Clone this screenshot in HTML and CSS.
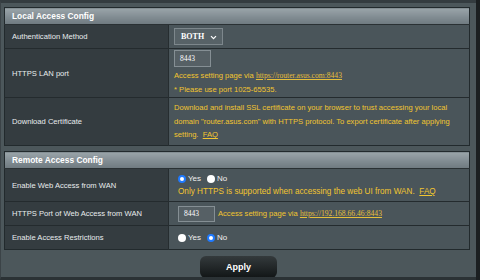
FILE: index.html
```html
<!DOCTYPE html>
<html lang="en">
<head>
    <meta charset="UTF-8">
    <title>Web Access Config</title>
    <link rel="stylesheet" href="styles.css">
</head>
<body>
    <div class="panel">
        <table class="form-table">
            <tr><th colspan="2" class="section-head">Local Access Config</th></tr>
            <tr class="row-short">
                <td class="label">Authentication Method</td>
                <td class="value">
                    <div class="select">BOTH
                        <svg class="chevron" width="7" height="5" viewBox="0 0 7 5"><path d="M1 1.2 L3.5 3.7 L6 1.2" fill="none" stroke="#ffffff" stroke-width="1.2"/></svg>
                    </div>
                </td>
            </tr>
            <tr class="row-lan">
                <td class="label">HTTPS LAN port</td>
                <td class="value">
                    <div class="input">8443</div>
                    <div class="hint">Access setting page via <a href="#" class="link">https://router.asus.com:8443</a></div>
                    <div class="hint">* Please use port 1025-65535.</div>
                </td>
            </tr>
            <tr class="row-cert">
                <td class="label">Download Certificate</td>
                <td class="value">
                    <div class="hint multi">Download and install SSL certificate on your browser to trust accessing your local domain "router.asus.com" with HTTPS protocol. To export certificate after applying setting. &nbsp;<a href="#" class="faq">FAQ</a></div>
                </td>
            </tr>
        </table>

        <table class="form-table">
            <tr><th colspan="2" class="section-head">Remote Access Config</th></tr>
            <tr class="row-wan">
                <td class="label">Enable Web Access from WAN</td>
                <td class="value indent">
                    <div class="radios">
                        <span class="radio on"></span><span class="opt">Yes</span>
                        <span class="radio"></span><span class="opt">No</span>
                    </div>
                    <div class="hint big">Only HTTPS is supported when accessing the web UI from WAN. &nbsp;<a href="#" class="faq">FAQ</a></div>
                </td>
            </tr>
            <tr class="row-short">
                <td class="label">HTTPS Port of Web Access from WAN</td>
                <td class="value indent">
                    <div class="inline">
                        <div class="input small">8443</div>
                        <span class="hint">Access setting page via <a href="#" class="link">https://192.168.66.46:8443</a></span>
                    </div>
                </td>
            </tr>
            <tr class="row-short">
                <td class="label">Enable Access Restrictions</td>
                <td class="value indent">
                    <div class="radios">
                        <span class="radio"></span><span class="opt">Yes</span>
                        <span class="radio on"></span><span class="opt">No</span>
                    </div>
                </td>
            </tr>
        </table>

        <div class="actions">
            <button class="apply-btn">Apply</button>
        </div>
    </div>
</body>
</html>
```

FILE: styles.css
```css
body {
    margin: 0;
    background-color: #1b1f21;
    font-family: 'Liberation Sans', Arial, sans-serif;
    font-size: 7.6px;
    color: #e8ecee;
}
.panel {
    width: 469px;
    height: 270px;
    overflow: hidden;
    background-color: #4c575b;
    border-top: 3px solid #343c40;
    border-left: 1px solid #3b4347;
    border-bottom: 3px solid #2b3235;
    padding: 4px 3px 0 3px;
}
.form-table {
    width: 466px;
    border-collapse: collapse;
    border: 1px solid #222a2d;
    margin-bottom: 5px;
}
.section-head {
    height: 16px;
    padding: 0 0 0 7px;
    text-align: left;
    font-weight: bold;
    font-size: 8.4px;
    color: #ffffff;
    background: linear-gradient(#9aa4a9, #838e94 50%, #6f7a80);
    border-bottom: 1px solid #2a3134;
}
.form-table td {
    border-top: 1px solid #242b2e;
    vertical-align: middle;
    padding-top: 0;
    padding-bottom: 0;
}
.label {
    width: 155px;
    padding-left: 7px;
    background-color: #343c40;
    border-right: 1px solid #262d30;
}
.value {
    background-color: #4a555a;
    padding-left: 5px;
}
.value.indent {
    padding-left: 9px;
}
.row-short td {
    height: 23px;
}
.row-lan td {
    height: 48px;
}
.row-cert td {
    height: 47px;
}
.row-wan td {
    height: 32px;
}
.select {
    display: inline-flex;
    align-items: center;
    gap: 6px;
    height: 15px;
    padding: 0 5px 0 6px;
    background-color: #576267;
    border: 1px solid #7d878c;
    font-family: 'Liberation Serif', serif;
    font-weight: bold;
    font-size: 8px;
    color: #ffffff;
}
.chevron {
    display: block;
    margin-top: 1px;
}
.input {
    width: 30px;
    height: 15px;
    line-height: 15px;
    padding-left: 5px;
    margin: 1px 0 2px;
    background-color: #566065;
    border: 1px solid #858f94;
    font-family: 'Liberation Serif', serif;
    font-size: 7.5px;
    color: #ffffff;
}
.input.small {
    height: 14px;
    line-height: 14px;
    margin: 0;
}
.hint {
    color: #f2c530;
    line-height: 14px;
}
.hint.multi {
    line-height: 13.5px;
}
.hint.big {
    font-size: 8.2px;
    line-height: 13px;
}
.link {
    font-family: 'Liberation Serif', serif;
    color: #e6bf3a;
    text-decoration: underline;
}
.faq {
    color: #f2c530;
    text-decoration: underline;
}
.inline {
    display: flex;
    align-items: center;
    gap: 3px;
}
.radios {
    display: flex;
    align-items: center;
    font-size: 8px;
    line-height: 12px;
    color: #f0f0f0;
}
.radio {
    width: 8px;
    height: 8px;
    border-radius: 50%;
    background-color: #ffffff;
    margin-right: 2px;
    box-sizing: border-box;
}
.opt {
    margin-right: 6px;
}
.radio.on {
    border: 2px solid #1f7aff;
    background-color: #ffffff;
}
.actions {
    display: flex;
    justify-content: center;
    padding-top: 1px;
}
.apply-btn {
    width: 77px;
    height: 22px;
    border: none;
    border-radius: 6px;
    background: linear-gradient(#343a3c, #111516);
    color: #ffffff;
    font-family: 'Liberation Sans', Arial, sans-serif;
    font-weight: bold;
    font-size: 9px;
}
```
